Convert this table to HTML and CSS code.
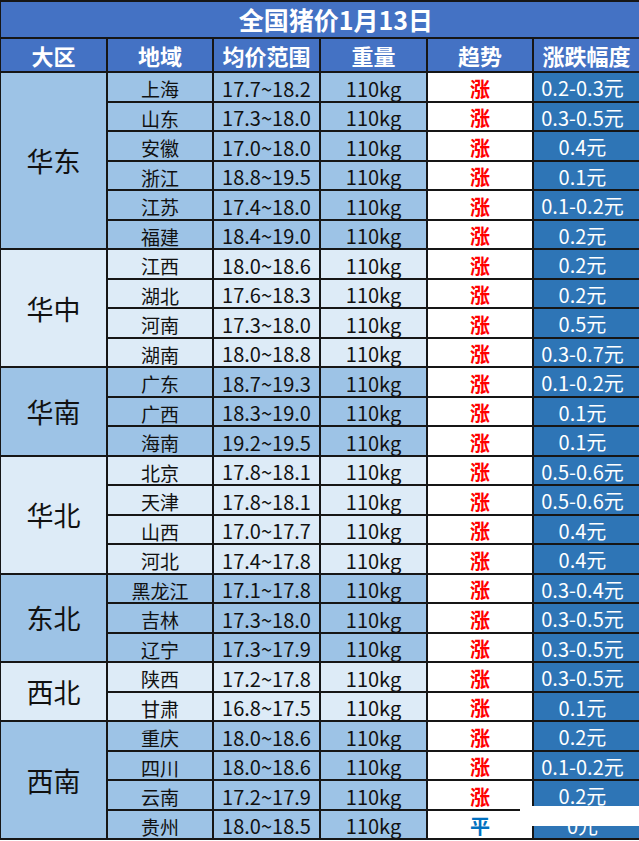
FILE: index.html
```html
<!DOCTYPE html>
<html lang="zh">
<head>
<meta charset="utf-8">
<title>全国猪价1月13日</title>
<link rel="stylesheet" href="styles.css">
</head>
<body>
<div class="sheet">
  <div class="title">全国猪价1月13日</div>
  <div class="hd">大区</div><div class="hd">地域</div><div class="hd">均价范围</div><div class="hd">重量</div><div class="hd">趋势</div><div class="hd">涨跌幅度</div>

  <div class="region mid span6">华东</div>
  <div class="c mid">上海</div><div class="c num mid">17.7~18.2</div><div class="c num mid">110kg</div><div class="trend up">涨</div><div class="chg">0.2-0.3元</div>
  <div class="c mid">山东</div><div class="c num mid">17.3~18.0</div><div class="c num mid">110kg</div><div class="trend up">涨</div><div class="chg">0.3-0.5元</div>
  <div class="c mid">安徽</div><div class="c num mid">17.0~18.0</div><div class="c num mid">110kg</div><div class="trend up">涨</div><div class="chg">0.4元</div>
  <div class="c mid">浙江</div><div class="c num mid">18.8~19.5</div><div class="c num mid">110kg</div><div class="trend up">涨</div><div class="chg">0.1元</div>
  <div class="c mid">江苏</div><div class="c num mid">17.4~18.0</div><div class="c num mid">110kg</div><div class="trend up">涨</div><div class="chg">0.1-0.2元</div>
  <div class="c mid">福建</div><div class="c num mid">18.4~19.0</div><div class="c num mid">110kg</div><div class="trend up">涨</div><div class="chg">0.2元</div>

  <div class="region light span4">华中</div>
  <div class="c light">江西</div><div class="c num light">18.0~18.6</div><div class="c num light">110kg</div><div class="trend up">涨</div><div class="chg">0.2元</div>
  <div class="c light">湖北</div><div class="c num light">17.6~18.3</div><div class="c num light">110kg</div><div class="trend up">涨</div><div class="chg">0.2元</div>
  <div class="c light">河南</div><div class="c num light">17.3~18.0</div><div class="c num light">110kg</div><div class="trend up">涨</div><div class="chg">0.5元</div>
  <div class="c light">湖南</div><div class="c num light">18.0~18.8</div><div class="c num light">110kg</div><div class="trend up">涨</div><div class="chg">0.3-0.7元</div>

  <div class="region mid span3">华南</div>
  <div class="c mid">广东</div><div class="c num mid">18.7~19.3</div><div class="c num mid">110kg</div><div class="trend up">涨</div><div class="chg">0.1-0.2元</div>
  <div class="c mid">广西</div><div class="c num mid">18.3~19.0</div><div class="c num mid">110kg</div><div class="trend up">涨</div><div class="chg">0.1元</div>
  <div class="c mid">海南</div><div class="c num mid">19.2~19.5</div><div class="c num mid">110kg</div><div class="trend up">涨</div><div class="chg">0.1元</div>

  <div class="region light span4">华北</div>
  <div class="c light">北京</div><div class="c num light">17.8~18.1</div><div class="c num light">110kg</div><div class="trend up">涨</div><div class="chg">0.5-0.6元</div>
  <div class="c light">天津</div><div class="c num light">17.8~18.1</div><div class="c num light">110kg</div><div class="trend up">涨</div><div class="chg">0.5-0.6元</div>
  <div class="c light">山西</div><div class="c num light">17.0~17.7</div><div class="c num light">110kg</div><div class="trend up">涨</div><div class="chg">0.4元</div>
  <div class="c light">河北</div><div class="c num light">17.4~17.8</div><div class="c num light">110kg</div><div class="trend up">涨</div><div class="chg">0.4元</div>

  <div class="region mid span3">东北</div>
  <div class="c mid">黑龙江</div><div class="c num mid">17.1~17.8</div><div class="c num mid">110kg</div><div class="trend up">涨</div><div class="chg">0.3-0.4元</div>
  <div class="c mid">吉林</div><div class="c num mid">17.3~18.0</div><div class="c num mid">110kg</div><div class="trend up">涨</div><div class="chg">0.3-0.5元</div>
  <div class="c mid">辽宁</div><div class="c num mid">17.3~17.9</div><div class="c num mid">110kg</div><div class="trend up">涨</div><div class="chg">0.3-0.5元</div>

  <div class="region light span2">西北</div>
  <div class="c light">陕西</div><div class="c num light">17.2~17.8</div><div class="c num light">110kg</div><div class="trend up">涨</div><div class="chg">0.3-0.5元</div>
  <div class="c light">甘肃</div><div class="c num light">16.8~17.5</div><div class="c num light">110kg</div><div class="trend up">涨</div><div class="chg">0.1元</div>

  <div class="region mid span4">西南</div>
  <div class="c mid">重庆</div><div class="c num mid">18.0~18.6</div><div class="c num mid">110kg</div><div class="trend up">涨</div><div class="chg">0.2元</div>
  <div class="c mid">四川</div><div class="c num mid">18.0~18.6</div><div class="c num mid">110kg</div><div class="trend up">涨</div><div class="chg">0.1-0.2元</div>
  <div class="c mid">云南</div><div class="c num mid">17.2~17.9</div><div class="c num mid">110kg</div><div class="trend up">涨</div><div class="chg">0.2元</div>
  <div class="c mid">贵州</div><div class="c num mid">18.0~18.5</div><div class="c num mid">110kg</div><div class="trend flat">平</div><div class="chg">0元</div>
</div>
<div class="smudge"></div>
</body>
</html>
```

FILE: styles.css
```css
html, body {
  margin: 0;
  padding: 0;
  background: #ffffff;
}
body {
  position: relative;
  width: 639px;
  height: 841px;
  overflow: hidden;
  font-family: "Noto Sans CJK SC", "Noto Sans", sans-serif;
}
.sheet {
  display: grid;
  grid-template-columns: 105px 104px 105px 105px 104px 105px;
  grid-template-rows: 35px 32px;
  grid-auto-rows: 27.5px;
  gap: 2px;
  padding: 2px 0 2px 1px;
  background: #161616;
  width: 638px;
}
.sheet > div {
  display: flex;
  align-items: center;
  justify-content: center;
  white-space: nowrap;
  line-height: 1;
}
.title {
  grid-column: 1 / -1;
  background: #4472c4;
  color: #ffffff;
  font-weight: 700;
  font-size: 25px;
  padding-left: 32px;
}
.hd {
  background: #4472c4;
  color: #ffffff;
  font-weight: 700;
  font-size: 22px;
}
.region {
  font-size: 27px;
  color: #111111;
}
.span2 { grid-row: span 2; }
.span3 { grid-row: span 3; }
.span4 { grid-row: span 4; }
.span6 { grid-row: span 6; }
.mid { background: #9dc3e6; }
.light { background: #ddebf7; }
.c {
  font-size: 19px;
  color: #111111;
  padding-top: 4px;
}
.num {
  font-size: 20px;
}
.trend {
  background: #ffffff;
  font-size: 20px;
  font-weight: 700;
  padding-top: 4px;
}
.up { color: #ff0000; }
.flat { color: #0070c0; }
.chg {
  background: #2e75b6;
  color: #ffffff;
  font-size: 20px;
  padding-top: 3px;
  padding-right: 8px;
}
.smudge {
  position: absolute;
  left: 520px;
  top: 806px;
  width: 122px;
  height: 20px;
  background: #ffffff;
  border-radius: 2px 0 0 8px;
}
```
